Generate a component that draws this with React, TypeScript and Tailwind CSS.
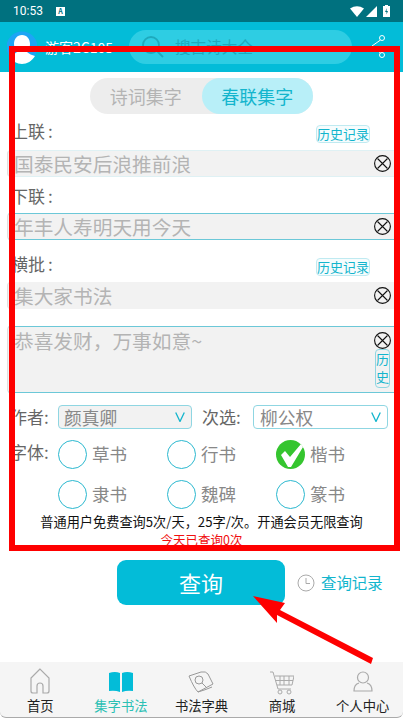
const fonts = [
  ['草书', '行书', '楷书'],
  ['隶书', '魏碑', '篆书'],
]

function ClearIcon() {
  return (
    <svg width="17" height="17" viewBox="0 0 17 17" fill="none" stroke="#111" strokeWidth="1.1">
      <circle cx="8.5" cy="8.5" r="7.9" />
      <path d="M3.5 3.5l10 10M13.5 3.5l-10 10" />
    </svg>
  )
}

function HistoryTag() {
  return (
    <span className="block mt-[2px] w-[54px] h-[18px] rounded-[4px] border border-[#bfeaf1] bg-[#f6fcfd] text-[13px] leading-[16px] text-center text-[#13b5cd] whitespace-nowrap">
      历史记录
    </span>
  )
}

function Field({ text, border }: { text: string; border?: string }) {
  return (
    <div className={`h-[27px] mx-[7px] flex items-center justify-between rounded-l-[4px] border-l border-l-[#e0e0e0] bg-[#f2f2f2] pl-[6px] pr-[5px] ${border ?? ''}`}>
      <span className="text-[19.7px] text-[#b4b4b4] whitespace-nowrap">{text}</span>
      <ClearIcon />
    </div>
  )
}

function Label({ text, tag }: { text: string; tag?: boolean }) {
  return (
    <div className="flex items-center justify-between pl-[11px] pr-[33px] h-[27px]">
      <span className="pb-[3px] text-[17px] text-[#666]">{text}<span className="ml-[3px]">:</span></span>
      {tag && <HistoryTag />}
    </div>
  )
}

function Select({ text, second }: { text: string; second?: boolean }) {
  return (
    <div className={`h-[24px] flex items-center justify-between rounded-[4px] border border-[#8fd6e2] pr-[6px] ${second ? 'w-[135px] bg-white pl-[6px]' : 'w-[134px] bg-[#f2f2f2] pl-[5px]'}`}>
      <span className="text-[17.7px] text-[#888]">{text}</span>
      <svg width="10" height="10" viewBox="0 0 10 10" fill="none" stroke="#13b5cd" strokeWidth="1.3">
        <path d="M.7 .5L5 9.5 9.3 .5" />
      </svg>
    </div>
  )
}

function Radio({ text, checked }: { text: string; checked?: boolean }) {
  return (
    <div className="w-[109px] flex items-center gap-[5px]">
      {checked ? (
        <svg width="29" height="29" viewBox="0 0 29 29">
          <circle cx="14.5" cy="14.5" r="14.5" fill="#35c52f" />
          <path d="M5 15l4-4 5 6L25 4l2 3-12 20h-3z" fill="#fff" />
        </svg>
      ) : (
        <span className="w-[29px] h-[29px] rounded-full border border-[#2ab8cf]" />
      )}
      <span className="text-[17.5px] text-[#888]">{text}</span>
    </div>
  )
}

function NavItem({ label, active, children }: { label: string; active?: boolean; children: React.ReactNode }) {
  return (
    <div className="flex-1 flex flex-col items-center">
      <div className="h-[31px] flex items-end">{children}</div>
      <span className={`text-[13.3px] leading-[18px] mt-[2px] ${active ? 'text-[#2cc0b4]' : 'text-[#222]'}`}>{label}</span>
    </div>
  )
}

export default function App() {
  return (
    <div className="relative w-[403px] h-[718px] overflow-hidden bg-white flex flex-col" style={{ fontFamily: '"Noto Sans CJK SC", "Liberation Sans", sans-serif' }}>
      {/* status bar */}
      <div className="h-[22px] bg-[#00717f] flex items-center justify-between pl-[13px] pr-[13px] text-white">
        <div className="flex items-center gap-[13px]">
          <span className="text-[12px]" style={{ fontFamily: 'Roboto, sans-serif' }}>10:53</span>
          <span className="w-[9px] h-[9px] bg-white text-[#00717f] text-[7px] leading-[9px] text-center font-bold">A</span>
        </div>
        <div className="flex items-center">
          <svg width="14" height="11" viewBox="0 0 14 11"><path d="M0 2.5Q7-2 14 2.5L7 11z" fill="#fff" /></svg>
          <svg className="ml-[2px]" width="11" height="11" viewBox="0 0 11 11"><path d="M11 0v11H0z" fill="#fff" /></svg>
          <svg className="ml-[6px]" width="7" height="12" viewBox="0 0 7 12"><path d="M2 0h3v1h2v11H0V1h2z" fill="#fff" /><path d="M4 3L2 7h1.500v2.500L5 6H3.500z" fill="#00717f" /></svg>
        </div>
      </div>

      {/* header */}
      <div className="h-[50px] bg-[#03bcd8] flex items-center pl-[7px] pr-[14px]">
        <svg width="30" height="34" viewBox="0 0 30 34">
          <circle cx="15" cy="17" r="15.500" fill="#1ea5f5" />
          <path d="M15 5c5 0 8 4 8 9 0 3-1 6-3 8 2 2 5 3 8 4-3 5-8 8-13 8S5 31 2 26c3-1 6-2 8-4-2-2-3-5-3-8 0-5 3-9 8-9z" fill="#fff" />
        </svg>
        <span className="ml-[8px] w-[84px] text-[14px] text-white whitespace-nowrap">游客2C105</span>
        <div className="w-[223px] h-[34px] rounded-full bg-[#2ecde3] flex items-center pl-[12px]">
          <svg width="24" height="24" viewBox="0 0 24 24" fill="none" stroke="#1ea9bd" strokeWidth="1.800">
            <circle cx="10" cy="10" r="8" />
            <path d="M16 16l6 6" />
          </svg>
          <span className="ml-[10px] text-[15.6px] text-[#1ea9bd]">搜古诗大全</span>
        </div>
        <svg className="ml-auto" width="18" height="24" viewBox="0 0 18 24" fill="none" stroke="#fff" strokeWidth="1">
          <circle cx="11" cy="3" r="2.500" />
          <circle cx="11" cy="20" r="2.500" />
          <path d="M9.500 5L1 11l8.500 7" />
        </svg>
      </div>

      {/* form */}
      <div className="flex justify-center pt-[6px] pb-[5px]">
        <div className="flex h-[36px] w-[223px] rounded-full bg-[#ededed] text-[18px] leading-[36px] text-center">
          <span className="flex-1 text-[#b4b4b4]">诗词集字</span>
          <span className="flex-1 rounded-full bg-[#b8eff8] text-[#13b5cd]">春联集字</span>
        </div>
      </div>
      <Label text="上联" tag />
      <div className="h-[4px]" />
      <Field text="国泰民安后浪推前浪" border="border-y border-y-[#dff1f4]" />
      <div className="mt-[7px]"><Label text="下联" /></div>
      <div className="h-[2px]" />
      <Field text="年丰人寿明天用今天" border="border-y border-y-[#6cc8d8]" />
      <div className="mt-[12px]"><Label text="横批" tag /></div>
      <div className="h-[3px]" />
      <Field text="集大家书法" />
      <div className="relative mt-[17px] mx-[7px] h-[67px] rounded-l-[4px] bg-[#f2f2f2] border-y border-y-[#6cc8d8] border-l border-l-[#e0e0e0] pl-[6px] text-[19.7px] leading-[28px] text-[#b4b4b4]">
        恭喜发财，万事如意~
        <div className="absolute right-[5px] top-[5px] flex flex-col items-center">
          <ClearIcon />
          <span className="w-[15px] h-[39px] rounded-[4px] border border-[#8fd6e2] text-[13px] leading-[18px] text-center text-[#13b5cd]">历史</span>
        </div>
      </div>

      <div className="flex items-center pl-[10px] mt-[12px] h-[24px] text-[17px] text-[#666]">
        <span className="w-[48px]">作者:</span>
        <Select text="颜真卿" />
        <span className="ml-[10px] w-[51px]">次选:</span>
        <Select text="柳公权" second />
      </div>
      <div className="flex mt-[11px] pl-[10px]">
        <span className="w-[48px] text-[17px] text-[#666] leading-[24px]">字体:</span>
        <div className="flex flex-col gap-[11px]">
          {fonts.map((row) => (
            <div key={row[0]} className="flex">
              {row.map((f) => <Radio key={f} text={f} checked={f === '楷书'} />)}
            </div>
          ))}
        </div>
      </div>
      <p className="mt-[4px] text-center text-[13.2px] leading-[18px] text-[#111] whitespace-nowrap">普通用户免费查询5次/天，25字/次。开通会员无限查询</p>
      <p className="text-center text-[12.5px] leading-[18px] text-[#f01010]">今天已查询0次</p>

      {/* query */}
      <div className="flex items-center mt-[11px] pl-[117px]">
        <button className="w-[168px] h-[45px] rounded-[9px] bg-[#03bcd8] text-white text-[22px]">查询</button>
        <svg className="ml-[12px]" width="18" height="18" viewBox="0 0 18 18" fill="none" stroke="#aaa" strokeWidth="1">
          <circle cx="9" cy="9" r="8" />
          <path d="M9 4v5.500h4" />
        </svg>
        <span className="ml-[6px] text-[15.4px] text-[#13b5cd]">查询记录</span>
      </div>

      {/* bottom nav */}
      <div className="mt-auto h-[56px] bg-[#f5f5f5] rounded-b-[6px] border-b border-b-[#aaa] flex items-start pt-[2px]">
        <NavItem label="首页">
          <svg className="mb-[1px]" width="20" height="26" viewBox="0 0 20 26" fill="none" stroke="#aaa" strokeWidth="1.200">
            <path d="M10 1L1 10v13a2 2 0 002 2h4v-7a3 3 0 016 0v7h4a2 2 0 002-2V10z" />
          </svg>
        </NavItem>
        <NavItem label="集字书法" active>
          <svg className="mb-[3px]" width="24" height="21" viewBox="0 0 24 21" fill="#03bcd8">
            <path d="M0 2Q6 0 11 2v19Q6 19 0 20zM24 2Q18 0 13 2v19q5-2 11-1z" />
          </svg>
        </NavItem>
        <NavItem label="书法字典">
          <svg className="mb-[2px]" width="26" height="23" viewBox="0 0 26 23" fill="none" stroke="#999" strokeWidth="1">
            <path d="M1 6l12-4q5-1 7 2l5 10-15 8Q6 18 1 6z" />
            <path d="M10 22q7-2 14-5" />
            <circle cx="11" cy="10" r="4" />
            <path d="M14 13l4 4" />
          </svg>
        </NavItem>
        <NavItem label="商城">
          <svg width="24" height="24" viewBox="0 0 24 24" fill="none" stroke="#aaa" strokeWidth="1">
            <path d="M0 1h3l5 17h13" />
            <path d="M5 5h19l-2 9H7M10 5v9M14 5v9M19 5v9M6 9.500h17" />
            <circle cx="10" cy="21" r="2" />
            <circle cx="19" cy="21" r="2" />
          </svg>
        </NavItem>
        <NavItem label="个人中心">
          <svg className="mb-[3px]" width="20" height="21" viewBox="0 0 20 21" fill="none" stroke="#aaa" strokeWidth="1.200">
            <circle cx="10" cy="6.500" r="5.500" />
            <path d="M6 12C2 13 1 16 1 20h18c0-4-1-7-5-8" />
          </svg>
        </NavItem>
      </div>

      {/* red annotation */}
      <div className="absolute left-[9px] top-[46px] w-[391px] h-[505px] border-[6px] border-[#fe0000]" />
      <svg className="absolute left-0 top-0" width="403" height="718" viewBox="0 0 403 718">
        <path d="M253 596l32 7-5 7 93 48-2 6-94-49v8z" fill="#fe0000" />
      </svg>
    </div>
  )
}
